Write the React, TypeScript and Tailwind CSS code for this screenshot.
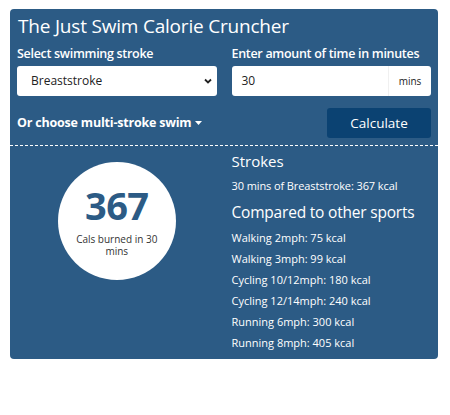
import React from "react";

const sports = [
  "Walking 2mph: 75 kcal",
  "Walking 3mph: 99 kcal",
  "Cycling 10/12mph: 180 kcal",
  "Cycling 12/14mph: 240 kcal",
  "Running 6mph: 300 kcal",
  "Running 8mph: 405 kcal",
];

export default function App() {
  return (
    <div className="w-[450px] h-[415px] bg-white" style={{ fontFamily: '"Open Sans", "Noto Sans", sans-serif' }}>
      <div className="ml-[10px] pt-[9px] w-[428px]">
        <div className="bg-[#2c5b85] rounded-[4px] text-white">
          <div className="px-[7px] pt-[5px] pb-[7px] border-b border-dashed border-white">
            <h1 className="text-[19px] leading-[24px] pl-[1px] tracking-[-0.2px]">The Just Swim Calorie Cruncher</h1>
            <div className="mt-[7px] grid grid-cols-2 gap-[15px]">
              <div>
                <div className="text-[12.5px] leading-[18px] font-semibold tracking-[-0.3px]">Select swimming stroke</div>
                <div className="mt-[3px] h-[30px] bg-white rounded-[3px] flex items-center justify-between pl-[14px] pr-[4px] text-[#222]">
                  <span className="text-[12px]">Breaststroke</span>
                  <svg width="10" height="10" viewBox="0 0 10 10"><path d="M2 3.5 L5 6.5 L8 3.5" stroke="#222" strokeWidth="1.8" fill="none" /></svg>
                </div>
              </div>
              <div>
                <div className="text-[12.5px] leading-[18px] font-semibold tracking-[-0.3px]">Enter amount of time in minutes</div>
                <div className="mt-[3px] h-[30px] bg-white rounded-[3px] flex items-stretch text-[#222]">
                  <span className="flex-1 flex items-center pl-[10px] text-[12px]">30</span>
                  <span className="w-[43px] border-l border-[#f0f0f0] flex items-center justify-center text-[10px]">mins</span>
                </div>
              </div>
            </div>
            <div className="mt-[12px] grid grid-cols-2 gap-[15px] items-center">
              <div className="text-[12.5px] font-bold flex items-center gap-[4px] tracking-[-0.2px]">
                Or choose multi-stroke swim
                <svg width="7" height="4" viewBox="0 0 7 4"><path d="M0 0 L7 0 L3.5 4 Z" fill="white" /></svg>
              </div>
              <div className="flex justify-end">
                <div className="w-[104px] h-[30px] bg-[#0b4272] rounded-[3px] flex items-center justify-center text-[13.5px]">Calculate</div>
              </div>
            </div>
          </div>
          <div className="px-[7px] pt-[5px] pb-[6px] grid grid-cols-2 gap-[15px]">
            <div className="flex justify-center items-start pt-[11px]">
              <div className="w-[118px] h-[118px] rounded-full bg-white flex flex-col items-center pt-[23px]">
                <div className="text-[38px] leading-[40px] font-bold text-[#2c5b85] tracking-[-0.5px]">367</div>
                <div className="text-[10px] leading-[12px] text-[#333] text-center w-[90px] mt-[8px]">Cals burned in 30 mins</div>
              </div>
            </div>
            <div>
              <div className="text-[15px] leading-[20px]">Strokes</div>
              <div className="mt-[7px] text-[11px] leading-[16px] tracking-[-0.1px]">30 mins of Breaststroke: 367 kcal</div>
              <div className="mt-[7px] text-[15.5px] leading-[22px] tracking-[-0.2px]">Compared to other sports</div>
              <div className="mt-[4px]">
                {sports.map((s) => (
                  <div key={s} className="text-[11px] leading-[21px]">{s}</div>
                ))}
              </div>
            </div>
          </div>
        </div>
      </div>
    </div>
  );
}
